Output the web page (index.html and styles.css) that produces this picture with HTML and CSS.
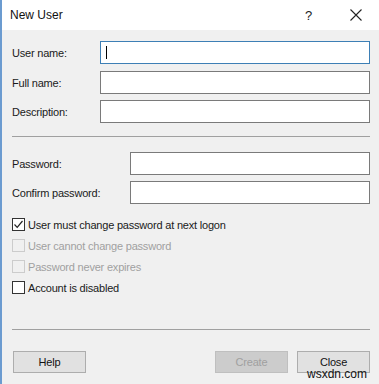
FILE: index.html
```html
<!DOCTYPE html>
<html>
<head>
<meta charset="utf-8">
<link rel="stylesheet" href="styles.css">
</head>
<body>
<div class="window">
  <div class="titlebar">
    <span class="title">New User</span>
    <span class="help-q">?</span>
    <svg class="close-x" width="12" height="12" viewBox="0 0 12 12"><path d="M0.5 0.5 L11.5 11.5 M11.5 0.5 L0.5 11.5" stroke="#222" stroke-width="1.1" fill="none"/></svg>
  </div>
  <div class="content">
    <div class="row first">
      <label class="lbl">User name:</label>
      <div class="input focus wide"><span class="caret"></span></div>
    </div>
    <div class="row r2">
      <label class="lbl">Full name:</label>
      <div class="input wide"></div>
    </div>
    <div class="row r3">
      <label class="lbl">Description:</label>
      <div class="input wide"></div>
    </div>
    <div class="sep sep1"></div>
    <div class="row r4">
      <label class="lbl">Password:</label>
      <div class="input narrow"></div>
    </div>
    <div class="row r5">
      <label class="lbl">Confirm password:</label>
      <div class="input narrow"></div>
    </div>
    <div class="checks">
      <div class="check">
        <span class="box"><svg width="11" height="11" viewBox="0 0 11 11"><path d="M1.5 5.5 L4.2 8.3 L9.5 2" stroke="#222" stroke-width="1.2" fill="none"/></svg></span>
        <span>User must change password at next logon</span>
      </div>
      <div class="check disabled"><span class="box"></span><span>User cannot change password</span></div>
      <div class="check disabled"><span class="box"></span><span>Password never expires</span></div>
      <div class="check"><span class="box"></span><span>Account is disabled</span></div>
    </div>
    <div class="sep sep2"></div>
    <div class="buttons">
      <button class="btn">Help</button>
      <div class="spacer"></div>
      <button class="btn dis">Create</button>
      <button class="btn">Close</button>
    </div>
  </div>
  <div class="watermark">wsxdn.com</div>
</div>
</body>
</html>
```
FILE: styles.css
```css
* { box-sizing: border-box; }
html, body { margin: 0; padding: 0; }
body {
  width: 379px;
  height: 384px;
  overflow: hidden;
  font-family: "Liberation Sans", Arial, sans-serif;
  font-size: 11px;
  letter-spacing: -0.2px;
  color: #1a1a1a;
}
.window {
  position: relative;
  width: 379px;
  height: 384px;
  background: #f0f0f0;
  border-left: 2px solid #6b9bd0;
}
.titlebar {
  height: 30px;
  background: #ffffff;
  display: flex;
  align-items: center;
  padding-left: 8px;
}
.title { font-size: 12px; color: #111; flex: 1; letter-spacing: 0; }
.help-q { font-size: 13px; color: #222; width: 12px; margin-right: 33px; }
.close-x { margin-right: 17px; }
.content {
  padding: 11px 9px 0 10px;
  display: flex;
  flex-direction: column;
}
.row {
  display: flex;
  align-items: center;
  height: 23px;
}
.r2 { margin-top: 7px; }
.r3 { margin-top: 6px; }
.r4 { margin-top: 15px; }
.r5 { margin-top: 6px; }
.lbl { flex: 1; }
.input {
  height: 23px;
  background: #fff;
  border: 1px solid #7a7a7a;
  display: flex;
  align-items: center;
}
.wide { width: 270px; }
.narrow { width: 240px; }
.input.focus { border-color: #3d7fb5; }
.caret { width: 1px; height: 13px; background: #000; margin-left: 5px; }
.sep {
  height: 1px;
  background: #a0a0a0;
}
.sep1 { margin-top: 13px; }
.checks {
  margin-top: 10px;
  display: flex;
  flex-direction: column;
}
.check {
  height: 21px;
  display: flex;
  align-items: center;
}
.box {
  width: 13px;
  height: 13px;
  border: 1px solid #333;
  background: #fff;
  margin-right: 3px;
  display: flex;
  align-items: center;
  justify-content: center;
}
.check.disabled { color: #a0a0a0; }
.check.disabled .box { border-color: #cccccc; background: #f0f0f0; }
.sep2 { margin-top: 31px; }
.buttons {
  margin-top: 21px;
  display: flex;
  gap: 9px;
  padding-left: 1px;
}
.spacer { flex: 1; }
.btn {
  width: 73px;
  height: 22px;
  background: #e1e1e1;
  border: 1px solid #adadad;
  font-family: "Liberation Sans", Arial, sans-serif;
  font-size: 11px;
  letter-spacing: -0.2px;
  color: #111;
  padding: 0;
}
.btn.dis {
  background: #cccccc;
  border-color: #bfbfbf;
  color: #a0a0a0;
}
.watermark {
  position: absolute;
  left: 305px;
  top: 367px;
  font-family: "Liberation Sans", Arial, sans-serif;
  font-size: 12px;
  letter-spacing: 0;
  color: #111;
}
```
